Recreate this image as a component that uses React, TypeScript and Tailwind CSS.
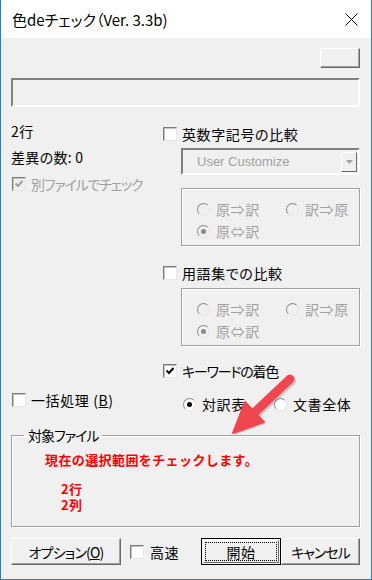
import React from "react";

function Check({ color }: { color: string }) {
  return (
    <svg width="10" height="10" viewBox="0 0 10 10">
      <path d="M1.5 4.5 L4 7 L8.5 2" fill="none" stroke={color} strokeWidth="2" />
    </svg>
  );
}

function Checkbox({ checked, disabled }: { checked?: boolean; disabled?: boolean }) {
  return (
    <span
      className={`w-[14px] h-[14px] shrink-0 flex items-center justify-center border border-t-[#7a7a7a] border-l-[#7a7a7a] border-r-[#e6e6e6] border-b-[#e6e6e6] shadow-[inset_1px_1px_0_#c4c4c4] ${
        disabled ? "bg-[#f0f0f0]" : "bg-white"
      }`}
    >
      {checked && <Check color={disabled ? "#a0a0a0" : "#000"} />}
    </span>
  );
}

function Radio({ selected, disabled }: { selected?: boolean; disabled?: boolean }) {
  return (
    <span
      className={`w-[13px] h-[13px] shrink-0 rounded-full flex items-center justify-center border border-t-[#8a8a8a] border-l-[#8a8a8a] border-r-[#e4e4e4] border-b-[#e4e4e4] ${
        disabled ? "bg-[#f0f0f0]" : "bg-white"
      }`}
    >
      {selected && (
        <span className={`w-[5px] h-[5px] rounded-full ${disabled ? "bg-[#8a8a8a]" : "bg-black"}`} />
      )}
    </span>
  );
}

function CheckRow({
  label,
  checked,
  disabled,
  tight,
}: {
  label: React.ReactNode;
  checked?: boolean;
  disabled?: boolean;
  tight?: boolean;
}) {
  return (
    <div className="flex items-center h-[16px]">
      <Checkbox checked={checked} disabled={disabled} />
      <span
        className={`ml-[5px] leading-[16px] whitespace-nowrap ${tight ? "tracking-[-1.2px]" : ""} ${
          disabled ? "text-[#a0a0a0]" : "text-black"
        }`}
      >
        {label}
      </span>
    </div>
  );
}

function DirectionGroup() {
  return (
    <div className="h-[58px] border border-[#a0a0a0] shadow-[inset_1px_1px_0_#fff,1px_1px_0_#fff] pl-[15px] pt-[12px] text-[#a0a0a0]">
      <div className="flex items-center h-[16px]">
        <div className="flex items-center w-[89px]">
          <Radio disabled />
          <span className="ml-[6px]">原⇒訳</span>
        </div>
        <div className="flex items-center">
          <Radio disabled />
          <span className="ml-[6px]">訳⇒原</span>
        </div>
      </div>
      <div className="flex items-center h-[16px] mt-[6px]">
        <Radio disabled selected />
        <span className="ml-[6px]">原⇔訳</span>
      </div>
    </div>
  );
}

function Button({ children, width, isDefault }: { children: React.ReactNode; width: string; isDefault?: boolean }) {
  if (isDefault) {
    return (
      <div className={`${width} h-[27px] border border-black bg-[#f0f0f0] p-[1px]`}>
        <div className="w-full h-full border border-t-white border-l-white border-r-[#696969] border-b-[#696969] p-[1px]">
          <div className="w-full h-full border border-dotted border-black flex items-center justify-center leading-none">
            {children}
          </div>
        </div>
      </div>
    );
  }
  return (
    <div
      className={`${width} h-[27px] bg-[#f0f0f0] border border-t-white border-l-white border-r-[#696969] border-b-[#696969] shadow-[inset_-1px_-1px_0_#a0a0a0] flex items-center justify-center leading-none`}
    >
      {children}
    </div>
  );
}

export default function App() {
  return (
    <div className="relative w-[372px] h-[580px] flex flex-col border-x border-b border-[#1b82d6] bg-[#f0f0f0] font-['Noto_Sans_CJK_JP','Noto_Sans',sans-serif] text-[14px] tracking-[0.6px] text-black [font-feature-settings:'palt'] overflow-hidden">
      {/* title bar */}
      <div className="h-[38px] shrink-0 bg-white flex items-center pl-[11px] pr-[13px]">
        <span className="text-[15px] leading-none tracking-[0px]">色deチェック（Ver. 3.3b)</span>
        <svg className="ml-auto" width="13" height="13" viewBox="0 0 13 13">
          <path d="M0.5 0.5 L12.5 12.5 M12.5 0.5 L0.5 12.5" stroke="#000" strokeWidth="1" />
        </svg>
      </div>

      <div className="flex flex-col pl-[10px] pr-[11px]">
        <div className="mt-[10px] ml-auto w-[40px] h-[20px] border border-t-white border-l-white border-r-[#696969] border-b-[#696969] shadow-[inset_-1px_-1px_0_#a0a0a0]" />
        <div className="mt-[10px] h-[29px] border-t-2 border-l-2 border-[#808080] border-b-2 border-r-2 border-b-white border-r-white" />

        <div className="flex">
          {/* left column */}
          <div className="w-[152px] flex flex-col">
            <div className="mt-[16px] h-[16px] leading-[16px]">2行</div>
            <div className="mt-[10px] h-[16px] leading-[16px] tracking-[0.3px]">差異の数: 0</div>
            <div className="mt-[11px] ml-[1px]">
              <CheckRow label="別ファイルでチェック" checked disabled tight />
            </div>
            <div className="mt-[200px] ml-[1px]">
              <CheckRow
                label={
                  <>
                    一括処理 (<span className="underline">B</span>)
                  </>
                }
              />
            </div>
          </div>

          {/* right column */}
          <div className="flex-1 flex flex-col">
            <div className="mt-[19px]">
              <CheckRow label="英数字記号の比較" />
            </div>
            <div className="mt-[6px] ml-[18px] h-[27px] border-t-2 border-l-2 border-[#808080] border-b-2 border-r-2 border-b-white border-r-white flex items-center pl-[14px] pr-[1px]">
              <span className="font-['Liberation_Sans',sans-serif] text-[13px] tracking-[0px] text-[#a0a0a0]">User Customize</span>
              <div className="ml-auto w-[16px] h-[20px] border border-t-white border-l-white border-r-[#696969] border-b-[#696969] flex items-center justify-center">
                <svg width="7" height="4" viewBox="0 0 7 4">
                  <path d="M0 0 H7 L3.5 4 Z" fill="#a0a0a0" />
                </svg>
              </div>
            </div>
            <div className="mt-[13px] ml-[18px]">
              <DirectionGroup />
            </div>
            <div className="mt-[19px]">
              <CheckRow label="用語集での比較" />
            </div>
            <div className="mt-[7px] ml-[18px]">
              <DirectionGroup />
            </div>
            <div className="mt-[17px]">
              <CheckRow label="キーワードの着色" checked tight />
            </div>
            <div className="mt-[17px] ml-[20px] flex items-center h-[16px]">
              <div className="flex items-center w-[91px]">
                <Radio selected />
                <span className="ml-[6px]">対訳表</span>
              </div>
              <div className="flex items-center">
                <Radio />
                <span className="ml-[6px]">文書全体</span>
              </div>
            </div>
          </div>
        </div>

        <fieldset className="mt-[15px] h-[100px] border border-[#a0a0a0] shadow-[inset_1px_1px_0_#fff,1px_1px_0_#fff]">
          <legend className="ml-[12px] px-[4px] leading-[16px] tracking-[-1px]">対象ファイル</legend>
          <div className="mt-[9px] pl-[33px] text-[13px] font-bold text-[#ff0000] leading-[16px] tracking-[0.4px] [font-feature-settings:normal]">
            <div className="h-[16px]">現在の選択範囲をチェックします。</div>
            <div className="mt-[13px] pl-[16px] whitespace-pre-line">{"2行\n2列"}</div>
          </div>
        </fieldset>

        <div className="mt-[11px] flex items-center">
          <Button width="w-[110px]">
            <span className="tracking-[-0.8px]">
              オプション(<span className="underline">O</span>)
            </span>
          </Button>
          <div className="ml-[9px]">
            <CheckRow label={<span className="ml-[1px]">高速</span>} />
          </div>
          <div className="ml-auto flex">
            <Button width="w-[80px]" isDefault>
              開始
            </Button>
            <Button width="w-[79px]">
              <span className="tracking-[-1px]">キャンセル</span>
            </Button>
          </div>
        </div>
      </div>

      {/* annotation arrow */}
      <svg className="absolute left-0 top-0 pointer-events-none" width="372" height="580" viewBox="0 0 372 580">
        <g transform="translate(1.5,2)" opacity="0.25">
          <line x1="289" y1="379" x2="252" y2="414" stroke="#555" strokeWidth="9" strokeLinecap="round" />
          <polygon points="232,433 244,402 263,422" fill="#555" />
        </g>
        <line x1="289" y1="379" x2="252" y2="414" stroke="#ef4650" strokeWidth="9" strokeLinecap="round" />
        <polygon points="232,433 244,402 263,422" fill="#ef4650" stroke="#ef4650" strokeWidth="2" strokeLinejoin="round" />
      </svg>
    </div>
  );
}
